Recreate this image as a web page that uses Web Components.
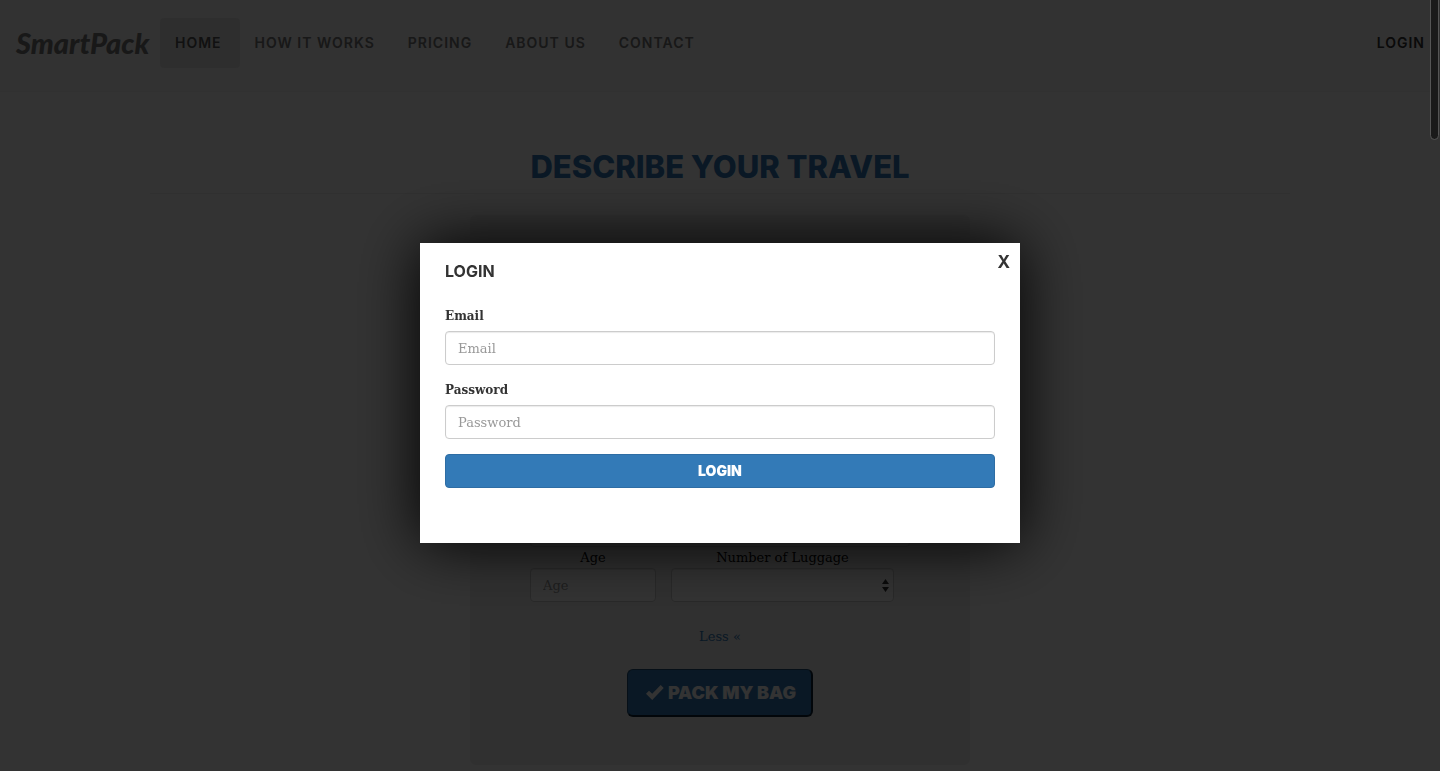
<!DOCTYPE html>
<html lang="en">
<head>
<meta charset="utf-8">
<title>SmartPack</title>
<style>
  body {
    margin: 0;
    background: #fff;
    color: #333;
    font-family: "DejaVu Serif", serif;
    font-size: 13px;
    line-height: 20px;
    --heading-font: Inter, "Open Sans", sans-serif;
    --primary: #337ab7;
    --primary-edge: #2e6da4;
    --muted: #999;
    --line: #ccc;
  }
</style>
</head>
<body>
<nav-bar>
  <nav-item active>Home</nav-item>
  <nav-item>How it works</nav-item>
  <nav-item>Pricing</nav-item>
  <nav-item>About us</nav-item>
  <nav-item>Contact</nav-item>
  <nav-item slot="end" strong>Login</nav-item>
</nav-bar>
<travel-section heading="Describe your travel">
  <travel-form></travel-form>
</travel-section>
<modal-overlay>
  <login-dialog></login-dialog>
</modal-overlay>
<scroll-thumb></scroll-thumb>

<script>
class Base extends HTMLElement {
  connectedCallback() {
    if (this.shadowRoot) return;
    this.attachShadow({ mode: 'open' }).innerHTML =
      '<style>*{box-sizing:border-box}' + this.css() + '</style>' + this.html();
  }
}

const fieldCss = `
  input, select {
    display: block; width: 100%; height: 34px; margin: 0; padding: 6px 12px;
    border: 1px solid var(--line); border-radius: 4px; background: #fff; color: #555;
    font: inherit; box-shadow: inset 0 1px 1px rgba(0,0,0,.08);
  }
  input::placeholder { color: var(--muted); opacity: 1; }`;

customElements.define('nav-bar', class extends Base {
  css() { return `
    :host { display: block; }
    nav { display: flex; align-items: center; min-height: 92px; padding: 0 0 6px; background: #f8f8f8; border-bottom: 1px solid #f3f3f3; }
    .brand { width: 160px; padding: 0 16px; color: #777; font: italic 900 29px/40px Lato, sans-serif; text-decoration: none; }
    .items { display: flex; flex: 1; }`; }
  html() { return `<nav><a class="brand" href="#">SmartPack</a><div class="items"><slot></slot></div><slot name="end"></slot></nav>`; }
});

customElements.define('nav-item', class extends Base {
  css() { return `
    :host { display: block; }
    a { display: block; padding: 15px 18px 15px 15px; border-radius: 4px; color: #777; text-decoration: none; text-transform: uppercase;
        font: 600 14px/20px var(--heading-font); letter-spacing: 1px; }
    :host([active]) a { background: #e7e7e7; color: #555; }
    :host([strong]) a { padding-right: 15px; color: #333; }`; }
  html() { return `<a href="#"><slot></slot></a>`; }
});

customElements.define('travel-section', class extends Base {
  css() { return `
    :host { display: block; max-width: 1140px; margin: 0 auto; padding: 57px 15px 0; }
    h1 { margin: 0 0 21px; padding-bottom: 8px; border-bottom: 1px solid #eee; text-align: center; text-transform: uppercase;
         color: var(--primary); font: 800 31px/36px var(--heading-font); }`; }
  html() { return `<h1>${this.getAttribute('heading')}</h1><slot></slot>`; }
});

customElements.define('travel-form', class extends Base {
  css() { return fieldCss + `
    :host { display: block; max-width: 500px; margin: 0 auto; }
    form { display: flex; flex-direction: column; justify-content: flex-end; min-height: 550px; padding: 48px 60px;
           border-radius: 6px; background: #f0f0f0; text-align: center; color: #000; }
    .row { display: grid; grid-template-columns: 126px 223px; gap: 15px; margin-top: 1px; }
    label { display: block; }
    .pick { position: relative; display: block; }
    select { appearance: none; }
    .pick svg { position: absolute; right: 5px; top: 11px; fill: #333; }
    .less { align-self: center; margin: 25px 0 22px; color: var(--primary); text-decoration: none; }
    button { align-self: center; display: flex; align-items: center; gap: 3px; height: 48px; padding: 0 15px 0 17px;
             border: 1px solid #204d74; border-right: 2px solid #0c2236; border-bottom: 2px solid #0c2236; border-radius: 6px;
             background: var(--primary); color: #fff; font: 900 18px/24px var(--heading-font); text-transform: uppercase; }`; }
  html() { return `
    <form>
      <input type="text" aria-label="Destination">
      <div class="row">
        <div><label for="age">Age</label><input id="age" type="text" placeholder="Age"></div>
        <div><label for="bags">Number of Luggage</label>
          <span class="pick"><select id="bags"></select>
          <svg width="7" height="13" viewBox="0 0 7 13" aria-hidden="true"><path d="M0 5 3.500 0 7 5zM0 8h7L3.500 13z"/></svg></span></div>
      </div>
      <a class="less" href="#">Less «</a>
      <button type="button"><svg width="20" height="18" viewBox="0 0 20 18" aria-hidden="true"><path fill="#fff" d="M1 9.800 4 6.800 7.200 9.700 15.700 1 18.700 4 7.200 16z"/></svg>Pack my bag</button>
    </form>`; }
});

customElements.define('modal-overlay', class extends Base {
  css() { return `
    :host { position: fixed; inset: 0; display: flex; align-items: center; justify-content: center; padding-top: 15px;
            box-sizing: border-box; background: rgba(0,0,0,.8); }`; }
  html() { return `<slot></slot>`; }
});

customElements.define('login-dialog', class extends Base {
  css() { return fieldCss + `
    :host { display: block; width: 600px; max-width: 100%; }
    section { position: relative; min-height: 300px; padding: 18px 25px 24px; background: #fff; box-shadow: 0 0 60px #000; }
    h2 { margin: 0 0 25px; font: 700 16px/20px var(--heading-font); text-transform: uppercase; }
    .close { position: absolute; top: 9px; right: 10px; padding: 0; border: 0; background: none; color: #333;
             font: 700 17px/20px var(--heading-font); }
    label { display: block; margin-bottom: 5px; font-weight: 700; font-size: 12px; }
    input { margin-bottom: 15px; }
    .submit { display: block; width: 100%; height: 34px; border: 1px solid var(--primary-edge); border-radius: 4px; background: var(--primary);
              color: #fff; font: 900 14px/20px var(--heading-font); text-transform: uppercase; }`; }
  html() { return `
    <section role="dialog" aria-modal="true" aria-labelledby="title">
      <button class="close" type="button" aria-label="Close">X</button>
      <h2 id="title">Login</h2>
      <form>
        <label for="email">Email</label><input id="email" type="email" placeholder="Email">
        <label for="password">Password</label><input id="password" type="password" placeholder="Password">
        <button class="submit" type="button">Login</button>
      </form>
    </section>`; }
});

customElements.define('scroll-thumb', class extends Base {
  css() { return `
    :host { position: fixed; top: -8px; right: 1px; width: 9px; height: 148px; box-sizing: border-box;
            border: 1px solid #555; border-radius: 5px; background: #1a1a1a; }`; }
  html() { return ''; }
});
</script>
</body>
</html>
